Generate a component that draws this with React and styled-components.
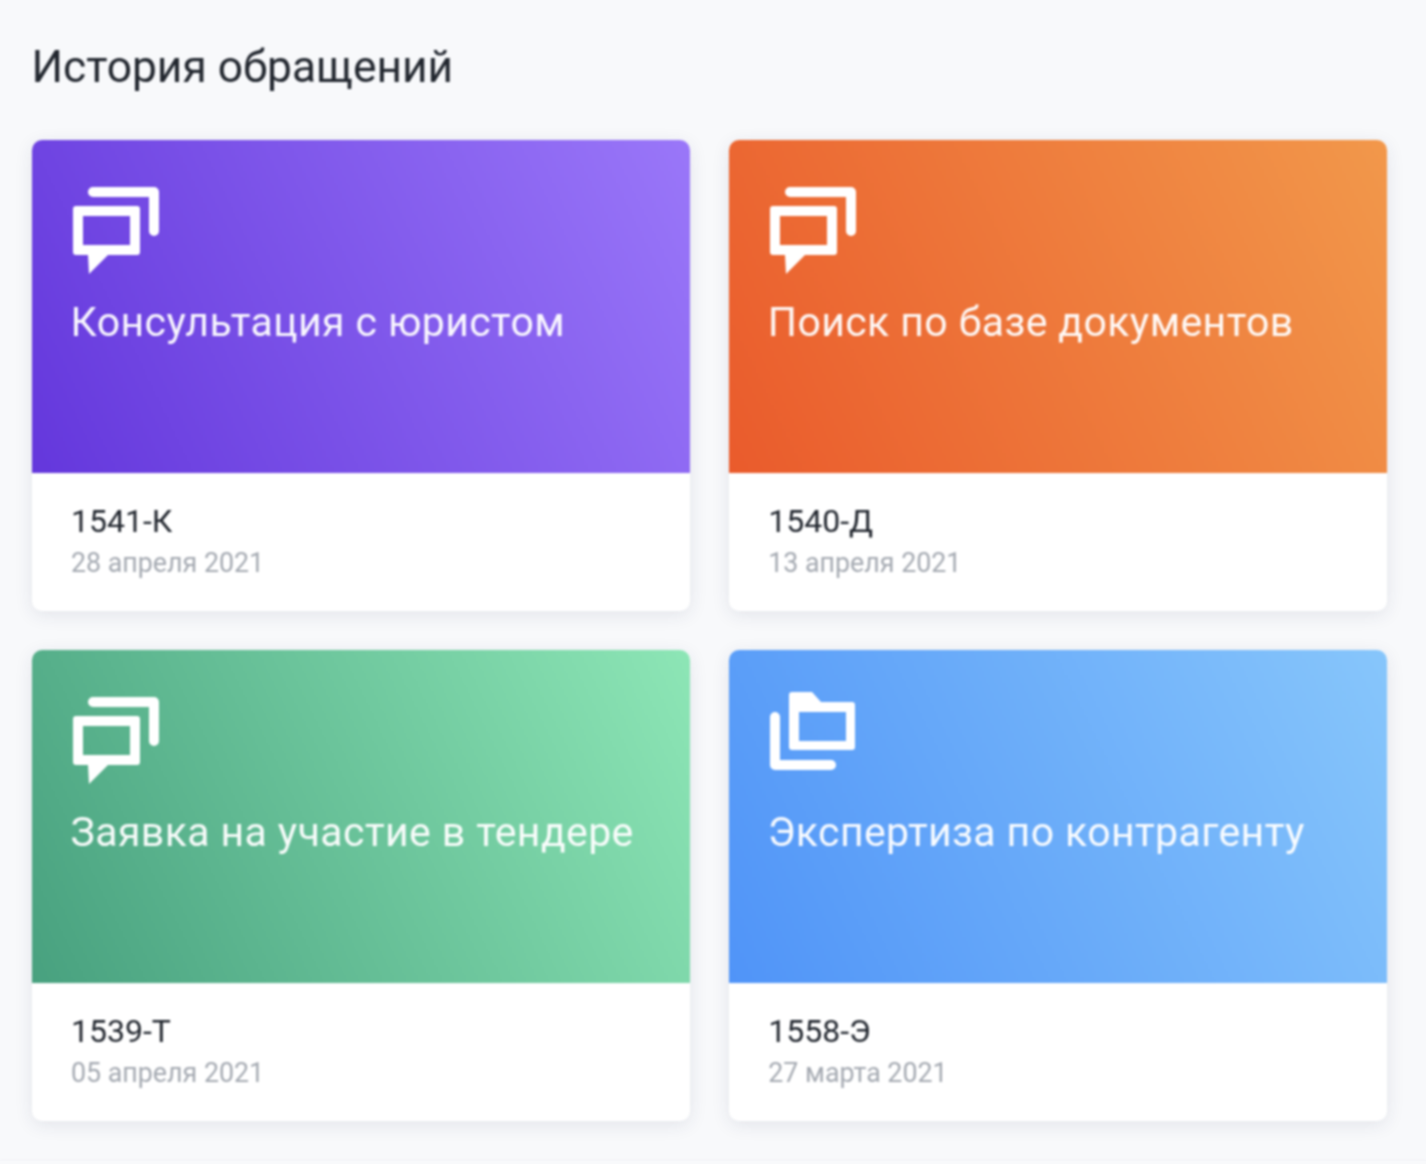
import React from "react";
import styled, { createGlobalStyle } from "styled-components";

const GlobalStyle = createGlobalStyle`
  html, body {
    margin: 0;
    padding: 0;
    background: #f8f9fb;
    font-family: Roboto, "Liberation Sans", sans-serif;
  }
`;

const Page = styled.div`
  box-sizing: border-box;
  width: 1426px;
  height: 1161px;
  padding: 41px 39px 0 31.5px;
  border-bottom: 1px solid #eff0f5;
  filter: blur(0.8px);
`;

const Title = styled.h1`
  margin: 0 0 47px;
  font-size: 44.3px;
  line-height: 52px;
  font-weight: 400;
  color: #22272f;
`;

const Grid = styled.div`
  display: grid;
  grid-template-columns: 1fr 1fr;
  column-gap: 39px;
  row-gap: 39.5px;
`;

const Card = styled.div`
  border-radius: 10px;
  background: #fff;
  overflow: hidden;
  box-shadow: 0 4px 18px rgba(40, 50, 90, 0.1);
`;

const Banner = styled.div`
  box-sizing: border-box;
  height: 333px;
  padding: ${(p) => (p.$folder ? "42px" : "47px")} 40px 0 39px;
  color: #fff;
  background: linear-gradient(${(p) => p.$gradient});
`;

const IconSlot = styled.div`
  height: ${(p) => (p.$folder ? "115px" : "110px")};
  margin-left: 2.5px;
  svg { display: block; }
`;

const Name = styled.div`
  font-size: 41px;
  line-height: 50px;
  font-weight: 400;
  letter-spacing: 0.4px;
  white-space: nowrap;
  color: rgba(255, 255, 255, 0.95);
`;

const Footer = styled.div`
  height: 137.5px;
  box-sizing: border-box;
  padding: 30px 40px 0 39.5px;
`;

const Code = styled.div`
  font-size: 32px;
  line-height: 36px;
  color: #22272f;
`;

const Date = styled.div`
  margin-top: 8px;
  font-size: 26.8px;
  line-height: 32px;
  color: #a4a9b1;
`;

const ChatIcon = () => (
  <svg width="87" height="88" viewBox="0 0 87 88" fill="#fff">
    <path d="M20 5 H81 V44" fill="none" stroke="#fff" strokeWidth="10" strokeLinecap="round" strokeLinejoin="round" />
    <path
      fillRule="evenodd"
      d="M3 19 H64 A3 3 0 0 1 67 22 V65 A3 3 0 0 1 64 68 H35 L16 87 L15 68 H3 A3 3 0 0 1 0 65 V22 A3 3 0 0 1 3 19 Z M10 29 V58 H57 V29 Z"
    />
  </svg>
);

const FolderIcon = () => (
  <svg width="86" height="79" viewBox="0 0 86 79" fill="#fff">
    <path d="M5 25 V73 H61" fill="none" stroke="#fff" strokeWidth="10" strokeLinecap="round" strokeLinejoin="round" />
    <path
      fillRule="evenodd"
      d="M22 0 H42 L51 10 H82 A3 3 0 0 1 85 13 V55 A3 3 0 0 1 82 58 H22 A3 3 0 0 1 19 55 V3 A3 3 0 0 1 22 0 Z M29 20 V49 H76 V20 Z"
    />
  </svg>
);

const items = [
  { name: "Консультация с юристом", code: "1541-К", date: "28 апреля 2021", gradient: "64deg, #6437dc, #9a77f9" },
  { name: "Поиск по базе документов", code: "1540-Д", date: "13 апреля 2021", gradient: "64deg, #ea5b2c, #f2984b" },
  { name: "Заявка на участие в тендере", code: "1539-Т", date: "05 апреля 2021", gradient: "64deg, #48a17f, #8de6b6" },
  { name: "Экспертиза по контрагенту", code: "1558-Э", date: "27 марта 2021", gradient: "64deg, #5094f8, #87c6fb", folder: true },
];

export default function App() {
  return (
    <>
      <GlobalStyle />
      <Page>
        <Title>История обращений</Title>
        <Grid>
          {items.map((item) => (
            <Card key={item.code}>
              <Banner $gradient={item.gradient} $folder={item.folder}>
                <IconSlot $folder={item.folder}>
                  {item.folder ? <FolderIcon /> : <ChatIcon />}
                </IconSlot>
                <Name>{item.name}</Name>
              </Banner>
              <Footer>
                <Code>{item.code}</Code>
                <Date>{item.date}</Date>
              </Footer>
            </Card>
          ))}
        </Grid>
      </Page>
    </>
  );
}
